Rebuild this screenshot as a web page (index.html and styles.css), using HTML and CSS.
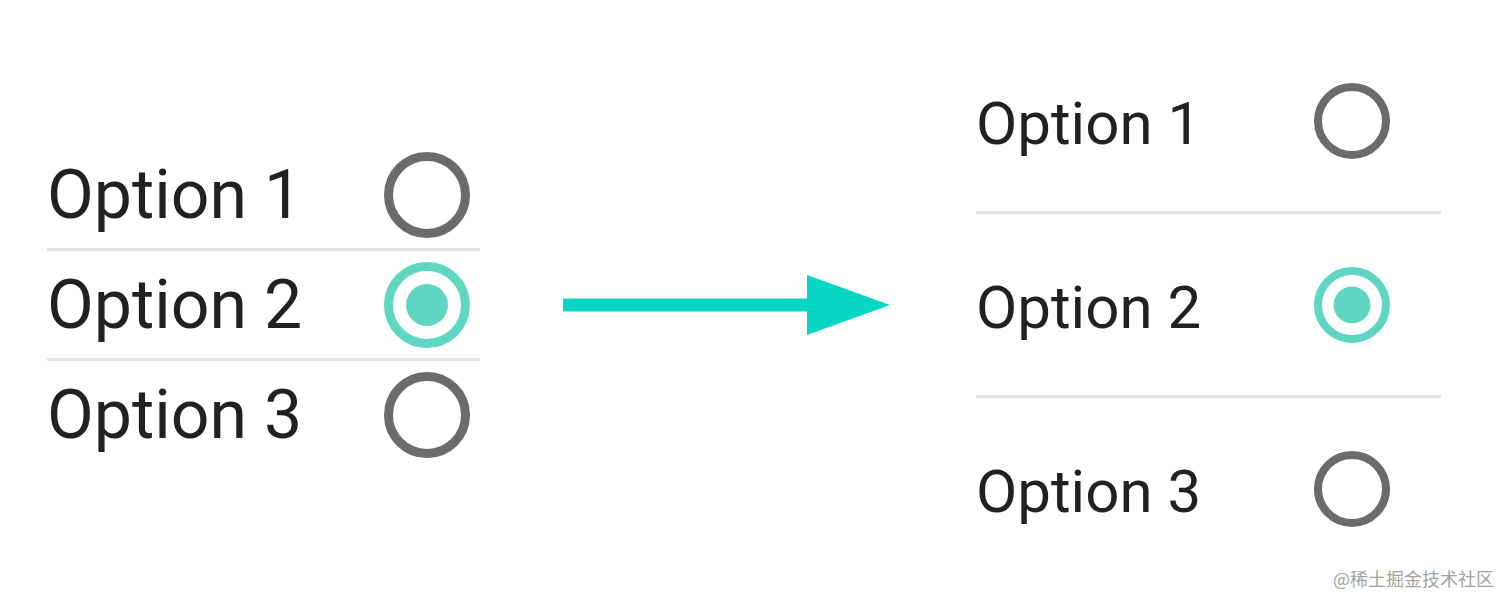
FILE: index.html
```html
<!DOCTYPE html>
<html lang="zh-CN">
<head>
    <meta charset="UTF-8">
    <meta name="viewport" content="width=device-width, initial-scale=1.0">
    <title>Radio list spacing</title>
    <link rel="stylesheet" href="styles.css">
</head>
<body>
    <main class="stage">
        <!-- compact list -->
        <ul class="options options--dense">
            <li class="option"><span class="label">Option 1</span><span class="radio"></span></li>
            <li class="option"><span class="label">Option 2</span><span class="radio checked"></span></li>
            <li class="option"><span class="label">Option 3</span><span class="radio"></span></li>
        </ul>

        <svg class="arrow" width="327" height="60" viewBox="0 0 327 60">
            <rect x="0" y="23.5" width="250" height="13" fill="#06d6c2"/>
            <polygon points="244,0 327,30 244,60" fill="#06d6c2"/>
        </svg>

        <!-- roomy list -->
        <ul class="options options--roomy">
            <li class="option"><span class="label">Option 1</span><span class="radio"></span></li>
            <li class="option"><span class="label">Option 2</span><span class="radio checked"></span></li>
            <li class="option"><span class="label">Option 3</span><span class="radio"></span></li>
        </ul>
    </main>

    <div class="watermark">@稀土掘金技术社区</div>
</body>
</html>
```

FILE: styles.css
```css
body {
    margin: 0;
    background: #ffffff;
    font-family: Roboto, "Noto Sans", sans-serif;
    color: #212121;
    overflow: hidden;
}

.stage {
    height: 609px;
    display: flex;
    align-items: center;
    padding-left: 47px;
}

.options {
    list-style: none;
    margin: 0;
    padding: 0;
}

.option {
    display: flex;
    justify-content: space-between;
    align-items: center;
    border-bottom: 3px solid #e2e2e2;
}
.option:last-child {
    border-bottom: none;
}

.label {
    line-height: 1;
}

.radio {
    position: relative;
    box-sizing: border-box;
    border-radius: 50%;
    border: 9px solid #6b6b6b;
}
.radio.checked {
    border-color: #5fd6c2;
}
.radio.checked::after {
    content: "";
    position: absolute;
    top: 50%;
    left: 50%;
    border-radius: 50%;
    background: #5fd6c2;
    transform: translate(-50%, -50%);
}

/* --- DENSE LIST --- */
.options--dense {
    width: 433px;
}
.options--dense .option {
    height: 107px;
    padding-right: 10px;
}
.options--dense .label {
    font-size: 68px;
}
.options--dense .radio {
    width: 86px;
    height: 86px;
}
.options--dense .radio.checked::after {
    width: 42px;
    height: 42px;
}

.arrow {
    display: block;
    margin-left: 83px;
    margin-right: 86px;
    flex-shrink: 0;
}

/* --- ROOMY LIST --- */
.options--roomy {
    width: 465px;
}
.options--roomy .option {
    height: 181px;
    padding-right: 51px;
}
.options--roomy .label {
    font-size: 60px;
    margin-top: 6px; /* sits a bit lower than the radio */
}
.options--roomy .radio {
    width: 76px;
    height: 76px;
    border-width: 8px;
}
.options--roomy .radio.checked::after {
    width: 37px;
    height: 37px;
}

.watermark {
    position: absolute;
    right: 18px;
    bottom: 18px;
    font-family: "Noto Sans CJK SC", sans-serif;
    font-size: 18px;
    color: #a3a3a3;
}
```
